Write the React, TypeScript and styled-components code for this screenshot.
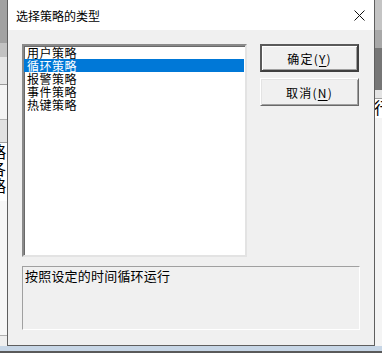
import React from "react";
import styled, { createGlobalStyle } from "styled-components";

const Global = createGlobalStyle`
  html, body { margin: 0; padding: 0; background: #a4a4a4; }
  body { font-family: "Noto Sans CJK SC", "Noto Sans", sans-serif; overflow: hidden; }
`;

const Screen = styled.div`
  width: 382px;
  height: 353px;
  display: flex;
  flex-direction: column;
  overflow: hidden;
`;

const TopRow = styled.div`
  display: flex;
  height: 346px;
`;

const Strip = styled.div`
  width: 7px;
  display: flex;
  flex-direction: column;
  overflow: hidden;
`;

const Band = styled.div<{ $h: number; $bg: string; $line?: string }>`
  height: ${(p) => p.$h}px;
  flex: none;
  background: ${(p) => p.$bg};
  border-bottom: ${(p) => (p.$line ? `1px solid ${p.$line}` : "none")};
  box-sizing: border-box;
  overflow: hidden;
`;

const Glyphs = styled.div<{ $shift: number }>`
  margin-left: ${(p) => p.$shift}px;
  font-size: 16px;
  line-height: 17px;
  color: #000;
  white-space: nowrap;
`;

const BottomStrip = styled.div`
  height: 7px;
  background: #c7d6e6;
  border-bottom: 2px solid #5a5a5a;
  box-sizing: content-box;
`;

const Dialog = styled.div`
  width: 368px;
  height: 346px;
  box-sizing: border-box;
  border: 1px solid #5f5f5f;
  border-top: none;
  background: #f0f0f0;
  display: flex;
  flex-direction: column;
`;

const TitleBar = styled.div`
  height: 30px;
  background: #fff;
  display: flex;
  align-items: center;
  justify-content: space-between;
  padding-left: 8px;
  padding-right: 9px;
  font-size: 12px;
  color: #000;
`;

const Body = styled.div`
  flex: 1;
  padding: 14px 15px 14px 14px;
  display: flex;
  flex-direction: column;
  gap: 9px;
`;

const Row = styled.div`
  display: flex;
  gap: 13px;
`;

const ListBox = styled.div`
  width: 225px;
  height: 213px;
  box-sizing: border-box;
  background: #fff;
  border-style: solid;
  border-width: 2px;
  border-color: #8a8a8a #e3e3e3 #e3e3e3 #8a8a8a;
  box-shadow: inset 1px 1px 0 #696969;
  display: flex;
  flex-direction: column;
  padding: 0 1px 0 0;
`;

const Item = styled.div<{ $sel?: boolean }>`
  height: 13px;
  line-height: 13px;
  font-size: 12px;
  padding-left: 3px;
  letter-spacing: 0.5px;
  background: ${(p) => (p.$sel ? "#0078d7" : "transparent")};
  color: ${(p) => (p.$sel ? "#fff" : "#000")};
  white-space: nowrap;
`;

const Buttons = styled.div`
  display: flex;
  flex-direction: column;
  gap: 6px;
`;

const Button = styled.button<{ $def?: boolean }>`
  width: 99px;
  height: 28px;
  box-sizing: border-box;
  margin: 0;
  padding: 0;
  font-family: "Noto Sans CJK SC", "Noto Sans", sans-serif;
  font-size: 12px;
  color: #000;
  background: #f0f0f0;
  border-style: solid;
  border-width: ${(p) => (p.$def ? 2 : 1)}px;
  border-color: ${(p) =>
    p.$def ? "#5a5a5a #3f3f3f #3f3f3f #5a5a5a" : "#fff #696969 #696969 #fff"};
  box-shadow: ${(p) =>
    p.$def
      ? "inset 1px 1px 0 #fff, inset -1px -1px 0 #a0a0a0"
      : "inset 1px 1px 0 #e3e3e3, inset -1px -1px 0 #a0a0a0"};
  display: flex;
  align-items: center;
  justify-content: center;
  letter-spacing: 1.2px;
  u { text-decoration: underline; text-underline-offset: 2px; }
`;

const Desc = styled.div`
  width: 338px;
  height: 64px;
  box-sizing: border-box;
  border-style: solid;
  border-width: 1px;
  border-color: #a0a0a0 #fff #fff #a0a0a0;
  padding: 1px 2px;
  font-size: 13px;
  line-height: 15px;
  letter-spacing: 0.2px;
  color: #000;
`;

const CloseIcon = () => (
  <svg width="11" height="11" viewBox="0 0 11 11">
    <path d="M0.5 0.5 L10.5 10.5 M10.5 0.5 L0.5 10.5" stroke="#111" strokeWidth="1" />
  </svg>
);

export default function App() {
  return (
    <Screen>
      <Global />
      <TopRow>
        <Strip>
          <Band $h={43} $bg="#a2a2a2" />
          <Band $h={14} $bg="#c2c2c2" />
          <Band $h={28} $bg="#e6e6e6" $line="#9a9a9a" />
          <Band $h={35} $bg="#f4f4f4" $line="#b4b4b4" />
          <Band $h={23} $bg="#e2e2e2" $line="#a0a0a0" />
          <Band $h={58} $bg="#fff">
            <Glyphs $shift={-10}>
              <div>略</div>
              <div>各</div>
              <div>略</div>
            </Glyphs>
          </Band>
          <Band $h={135} $bg="#f7f7f7" $line="#b0b0b0" />
          <Band $h={10} $bg="#efefef" />
        </Strip>
        <Dialog>
          <TitleBar>
            <span>选择策略的类型</span>
            <CloseIcon />
          </TitleBar>
          <Body>
            <Row>
              <ListBox>
                <Item>用户策略</Item>
                <Item $sel>循环策略</Item>
                <Item>报警策略</Item>
                <Item>事件策略</Item>
                <Item>热键策略</Item>
              </ListBox>
              <Buttons>
                <Button $def>
                  确定(<u>Y</u>)
                </Button>
                <Button>
                  取消(<u>N</u>)
                </Button>
              </Buttons>
            </Row>
            <Desc>按照设定的时间循环运行</Desc>
          </Body>
        </Dialog>
        <Strip>
          <Band $h={30} $bg="#c4c4c4" />
          <Band $h={18} $bg="#a8a8a8" />
          <Band $h={42} $bg="#767676" />
          <Band $h={9} $bg="#e4e4e4" $line="#a0a0a0" />
          <Band $h={19} $bg="#fff">
            <Glyphs $shift={-1}>行</Glyphs>
          </Band>
          <Band $h={228} $bg="#f4f4f4" />
        </Strip>
      </TopRow>
      <BottomStrip />
    </Screen>
  );
}
